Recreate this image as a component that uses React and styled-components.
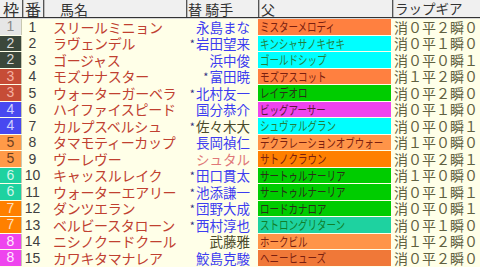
import React from 'react';
import styled, { createGlobalStyle } from 'styled-components';

const GlobalStyle = createGlobalStyle`
  body {
    margin: 0;
    background: #ffffe8;
    font-family: "Noto Sans CJK JP", "Noto Sans", sans-serif;
  }
`;

const WAKU = {
  1: { bg: '#e6e6e6', fg: '#888888' },
  2: { bg: '#3b473b', fg: '#d8d8d8' },
  3: { bg: '#c64c36', fg: '#f4b0a0' },
  4: { bg: '#4848f0', fg: '#d0d0ff' },
  5: { bg: '#ff9a48', fg: '#704020' },
  6: { bg: '#1ed2a0', fg: '#d0f6ea' },
  7: { bg: '#ff8000', fg: '#ffe0c0' },
  8: { bg: '#ee44ee', fg: '#ffe8ff' },
};

const SIRE = {
  orange: { bg: '#ff8040', fg: '#7a2010' },
  peach: { bg: '#ff9448', fg: '#7a2010' },
  deep: { bg: '#ff8000', fg: '#7a2010' },
  cyan: { bg: '#00ffff', fg: '#208040' },
  green: { bg: '#00cc00', fg: '#283018' },
  magenta: { bg: '#ee44ee', fg: '#601838' },
  teal: { bg: '#1ed2a0', fg: '#10802a' },
  rust: { bg: '#f07838', fg: '#7a2010' },
};

const horses = [
  { w: 1, n: 1, name: 'スリールミニョン', mark: false, jockey: '永島まな', jc: 'blue', sire: 'ミスターメロディ', s: 'orange', lap: '消０平２瞬０' },
  { w: 2, n: 2, name: 'ラヴェンデル', mark: true, jockey: '岩田望来', jc: 'blue', sire: 'キンシャサノキセキ', s: 'cyan', lap: '消０平１瞬０' },
  { w: 2, n: 3, name: 'ゴージャス', mark: false, jockey: '浜中俊', jc: 'blue', sire: 'ゴールドシップ', s: 'cyan', lap: '消０平０瞬１' },
  { w: 3, n: 4, name: 'モズナナスター', mark: true, jockey: '富田暁', jc: 'blue', sire: 'モズアスコット', s: 'orange', lap: '消１平２瞬０' },
  { w: 3, n: 5, name: 'ウォーターガーベラ', mark: true, jockey: '北村友一', jc: 'blue', sire: 'レイデオロ', s: 'green', lap: '消０平２瞬０' },
  { w: 4, n: 6, name: 'ハイファイスピード', mark: false, jockey: '国分恭介', jc: 'blue', sire: 'ビッグアーサー', s: 'magenta', lap: '消０平１瞬０' },
  { w: 4, n: 7, name: 'カルプスベルシュ', mark: true, jockey: '佐々木大', jc: 'dark', sire: 'シュヴァルグラン', s: 'cyan', lap: '消０平０瞬１' },
  { w: 5, n: 8, name: 'タマモティーカップ', mark: false, jockey: '長岡禎仁', jc: 'blue', sire: 'デクラレーションオブウォー', s: 'peach', lap: '消１平０瞬０' },
  { w: 5, n: 9, name: 'ヴーレヴー', mark: false, jockey: 'シュタル', jc: 'pink', sire: 'サトノクラウン', s: 'deep', lap: '消０平２瞬１' },
  { w: 6, n: 10, name: 'キャッスルレイク', mark: true, jockey: '田口貫太', jc: 'blue', sire: 'サートゥルナーリア', s: 'green', lap: '消１平０瞬０' },
  { w: 6, n: 11, name: 'ウォーターエアリー', mark: true, jockey: '池添謙一', jc: 'blue', sire: 'サートゥルナーリア', s: 'green', lap: '消０平１瞬１' },
  { w: 7, n: 12, name: 'ダンツエラン', mark: true, jockey: '団野大成', jc: 'blue', sire: 'ロードカナロア', s: 'green', lap: '消０平０瞬１' },
  { w: 7, n: 13, name: 'ベルビースタローン', mark: true, jockey: '西村淳也', jc: 'blue', sire: 'ストロングリターン', s: 'teal', lap: '消０平１瞬０' },
  { w: 8, n: 14, name: 'ニシノクードクール', mark: false, jockey: '武藤雅', jc: 'dark', sire: 'ホークビル', s: 'peach', lap: '消１平２瞬０' },
  { w: 8, n: 15, name: 'カワキタマナレア', mark: false, jockey: '鮫島克駿', jc: 'blue', sire: 'ヘニーヒューズ', s: 'rust', lap: '消０平２瞬０' },
];

const JOCKEY_COLOR = { blue: '#3c3cf0', dark: '#4a4a2a', pink: '#e07878' };

const COLS = '22px 21px 143px 72px 134px 88px';

const Table = styled.div`
  width: 480px;
  height: 267px;
  overflow: hidden;
  background: #ffffe8;
`;

const HeaderRow = styled.div`
  display: grid;
  grid-template-columns: ${COLS};
  height: 17px;
  background: #f0f0f0;
  border-bottom: 1px solid #333;
  box-shadow: 0 1px 0 #d8d8d8;
  margin-bottom: 1px;
`;

const HeaderCell = styled.div`
  display: flex;
  align-items: center;
  justify-content: ${(p) => p.$align || 'flex-start'};
  padding-left: ${(p) => p.$pad || 0}px;
  font-size: ${(p) => p.$size || 14}px;
  color: #333;
  line-height: 1;
  white-space: pre;
  border-left: ${(p) => (p.$first ? 'none' : '1px solid #555')};
  box-shadow: ${(p) => (p.$first ? 'none' : 'inset 1px 0 0 #bbb')};
`;

const Row = styled.div`
  display: grid;
  grid-template-columns: ${COLS};
  height: 16.53px;
  line-height: 15px;
`;

const WakuCell = styled.div`
  display: flex;
  align-items: center;
  justify-content: center;
  background: ${(p) => WAKU[p.$w].bg};
  color: ${(p) => WAKU[p.$w].fg};
  font-size: 14px;
  margin-bottom: 1px;
  border-right: 1px solid #c8c8b0;
  font-family: "Liberation Sans", "Noto Sans", sans-serif;
`;

const NumCell = styled.div`
  display: flex;
  align-items: center;
  justify-content: center;
  font-size: 14px;
  color: #404040;
  font-family: "Liberation Sans", "Noto Sans", sans-serif;
`;

const NameCell = styled.div`
  display: flex;
  align-items: center;
  padding-left: 10px;
  font-size: 14px;
  letter-spacing: -0.3px;
  color: #c04030;
  white-space: nowrap;
`;

const JockeyCell = styled.div`
  display: flex;
  align-items: center;
  justify-content: flex-end;
  padding-right: 8px;
  font-size: 13.5px;
  color: ${(p) => JOCKEY_COLOR[p.$c]};
  white-space: nowrap;
`;

const Mark = styled.span`
  font-size: 11px;
  color: #303080;
  margin-right: 1px;
`;

const SireCell = styled.div`
  display: flex;
  align-items: center;
  padding-left: 2px;
  margin: 0 1px 1px 0;
  background: ${(p) => SIRE[p.$s].bg};
  color: ${(p) => SIRE[p.$s].fg};
  white-space: nowrap;
  overflow: hidden;
`;

const SireText = styled.span`
  display: inline-block;
  font-size: 12.5px;
  transform: scaleX(0.76);
  transform-origin: left center;
`;

const LapCell = styled.div`
  display: flex;
  align-items: center;
  padding-left: 2px;
  font-size: 14px;
  color: #606040;
  white-space: nowrap;
`;

export default function App() {
  return (
    <>
      <GlobalStyle />
      <Table>
        <HeaderRow>
          <HeaderCell $first $align="center" $size={16}>枠</HeaderCell>
          <HeaderCell $align="center" $size={16}>番</HeaderCell>
          <HeaderCell $pad={16}>馬名</HeaderCell>
          <HeaderCell $pad={1}>{'替 騎手'}</HeaderCell>
          <HeaderCell $pad={2}>父</HeaderCell>
          <HeaderCell $pad={2} $size={13.5}>ラップギア</HeaderCell>
        </HeaderRow>
        {horses.map((h) => (
          <Row key={h.n}>
            <WakuCell $w={h.w}>{h.w}</WakuCell>
            <NumCell>{h.n}</NumCell>
            <NameCell>{h.name}</NameCell>
            <JockeyCell $c={h.jc}>
              {h.mark && <Mark>*</Mark>}
              {h.jockey}
            </JockeyCell>
            <SireCell $s={h.s}>
              <SireText>{h.sire}</SireText>
            </SireCell>
            <LapCell>{h.lap}</LapCell>
          </Row>
        ))}
      </Table>
    </>
  );
}
